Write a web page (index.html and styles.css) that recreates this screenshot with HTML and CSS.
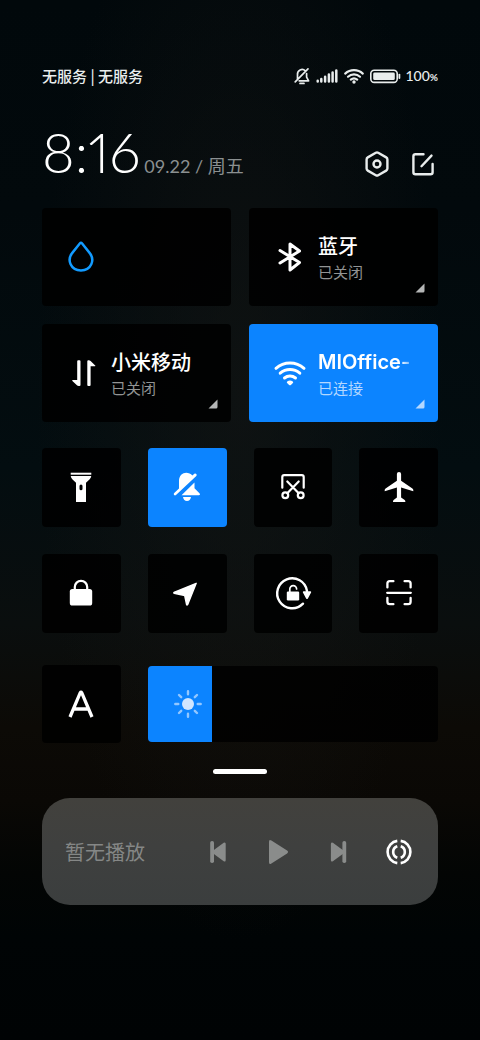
FILE: index.html
```html
<!DOCTYPE html>
<html lang="zh-CN">
<head>
<meta charset="utf-8">
<meta name="viewport" content="width=device-width, initial-scale=1">
<title>控制中心</title>
<link rel="stylesheet" href="styles.css">
</head>
<body>
<main class="control-center">
  <div class="status-bar">
    <span class="carrier">无服务 | 无服务</span>
    <div class="status-icons">
      <svg width="16" height="18" viewBox="0 0 16 18" aria-hidden="true">
        <path d="M3.500 12V7.500a4.600 4.600 0 0 1 7.800-3.700M12.600 6.500v3.700l2 3.600H5.200M6 16.400h4M14 1.800L1.200 14.800" fill="none" stroke="currentColor" stroke-width="1.700" stroke-linecap="round" stroke-linejoin="round"/>
      </svg>
      <svg width="22" height="18" viewBox="0 0 22 18" aria-hidden="true">
        <path d="M1.700 14.600v-.8M5.300 14.600v-2.600M9.100 14.600v-4.800M12.900 14.600v-7M16.600 14.600v-9M20.300 14.600v-11" stroke="currentColor" stroke-width="2.500" stroke-linecap="round"/>
      </svg>
      <svg width="20" height="18" viewBox="0 0 20 18" aria-hidden="true">
        <g fill="none" stroke="currentColor" stroke-width="2.200" stroke-linecap="round"><path d="M1.200 6.600a13 13 0 0 1 17.600 0M4 9.700a9 9 0 0 1 12 0M6.800 12.600a5 5 0 0 1 6.400 0"/></g>
        <circle cx="10" cy="15" r="1.700" fill="currentColor"/>
      </svg>
      <svg width="31" height="18" viewBox="0 0 31 18" aria-hidden="true">
        <rect x=".8" y="3.200" width="26.400" height="12.200" rx="3.400" fill="none" stroke="currentColor" stroke-width="1.600"/>
        <rect x="3.200" y="5.500" width="21.600" height="7.600" rx="1.400" fill="currentColor"/>
        <path d="M29.400 7.600v3.400" stroke="currentColor" stroke-width="1.800" stroke-linecap="round"/>
      </svg>
      <span class="battery">100<small>%</small></span>
    </div>
  </div>

  <header class="header">
    <div class="clock">
      <time class="time">8:16</time>
      <span class="date">09.22 / 周五</span>
    </div>
    <div class="actions">
      <button class="icon-button" type="button" aria-label="设置">
        <svg width="28" height="28" viewBox="0 0 28 28" fill="none" stroke="currentColor" stroke-width="2.400" stroke-linejoin="round">
          <path d="M12.800 2.800q1.200-.7 2.400 0l8 4.600q1.200.7 1.200 2v9.200q0 1.300-1.200 2l-8 4.600q-1.200.7-2.400 0l-8-4.600q-1.200-.7-1.200-2V9.400q0-1.300 1.200-2z"/>
          <circle cx="14" cy="14" r="3.500"/>
        </svg>
      </button>
      <button class="icon-button" type="button" aria-label="编辑">
        <svg width="28" height="28" viewBox="0 0 28 28" fill="none" stroke="currentColor" stroke-width="2.400" stroke-linecap="round">
          <path d="M14.500 4.200H6.400q-2 0-2 2v16q0 2 2 2h15.200q2 0 2-2v-8.200M12.500 16.200L22.500 5.600"/>
        </svg>
      </button>
    </div>
  </header>

  <section class="cards">
    <button class="card" type="button" aria-label="流量">
      <svg class="card-icon drop" viewBox="0 0 34 34" fill="none" stroke="currentColor" stroke-width="2.600" stroke-linejoin="round">
        <path d="M15 2.800q-.6 0-1.200.7L6.300 12.600C0 20 4.500 30.500 15 30.500S30 20 23.700 12.600L16.200 3.500q-.6-.7-1.200-.7z" transform="translate(.4 0) scale(.97 1)"/>
      </svg>
    </button>
    <button class="card" type="button">
      <svg class="card-icon" viewBox="0 0 34 34" fill="none" stroke="currentColor" stroke-width="3" stroke-linecap="round" stroke-linejoin="round">
        <path d="M7 10.500l19.500 12L17 30V4l9.500 7L7 23"/>
      </svg>
      <span class="card-text"><strong>蓝牙</strong><span class="state">已关闭</span></span>
      <svg class="corner" viewBox="0 0 10 10"><path d="M9.500.5v7.500Q9.500 9.500 8 9.500H.5z" fill="currentColor"/></svg>
    </button>
    <button class="card" type="button">
      <svg class="card-icon" viewBox="0 0 34 34" fill="currentColor">
        <path d="M11.200 5.300q0-1 1-1h1.300q1 0 1 1V29q0 1-1 1h-.8q-1 0-1.800-.8l-4.500-4.300q-.6-.8.300-.8h4.500zM21.300 29q0 1 1 1h1.300q1 0 1-1V10.200h4.300q1-.1.300-.8l-4.600-4.400q-.8-.7-1.800-.7h-.5q-1 0-1 1z"/>
      </svg>
      <span class="card-text"><strong>小米移动</strong><span class="state">已关闭</span></span>
      <svg class="corner" viewBox="0 0 10 10"><path d="M9.500.5v7.500Q9.500 9.500 8 9.500H.5z" fill="currentColor"/></svg>
    </button>
    <button class="card active" type="button" aria-pressed="true">
      <svg class="card-icon" viewBox="0 0 34 34">
        <g fill="none" stroke="currentColor" stroke-width="3" stroke-linecap="round"><path d="M3 12.300a21 21 0 0 1 28 0M7.200 17.200a15 15 0 0 1 19.600 0M11.500 22a8.500 8.500 0 0 1 11 0"/></g>
        <path d="M14.200 25.500q2.800-2 5.600 0 .8.600.1 1.400l-2 2q-.9.800-1.800 0l-2-2q-.7-.8.100-1.400z" fill="currentColor"/>
      </svg>
      <span class="card-text"><strong class="network">MIOffice-</strong><span class="state">已连接</span></span>
      <svg class="corner" viewBox="0 0 10 10"><path d="M9.500.5v7.500Q9.500 9.500 8 9.500H.5z" fill="currentColor"/></svg>
    </button>
  </section>

  <section class="tiles">
    <button class="tile" type="button" aria-label="手电筒">
      <svg viewBox="0 0 32 32" fill="currentColor"><path d="M5.700 1.700h20.600v2H5.700z"/><path fill-rule="evenodd" d="M5.700 5h20.600q-.3 2-1.600 3.200l-3.700 3.500V31h-10V11.700L7.300 8.200Q6 7 5.700 5zM16 13.500q-1.500 0-1.500 1.500v2.800q0 1.500 1.500 1.500t1.500-1.500V15q0-1.500-1.500-1.500z"/></svg>
    </button>
    <button class="tile active" type="button" aria-label="静音" aria-pressed="true">
      <svg viewBox="0 0 32 32" fill="currentColor"><path d="M8 17.500V10c0-9 9-10.500 13.400-5.500l1.900-1.700q1.100-.8 2 .1t0 2L5 24q-1.100.8-1.900-.1-.8-1 .1-2zM23.500 11.500v5.700l5.200 5.300q1 1.800-.8 1.800H10.500zM12 26h8q-.7 4-4 4t-4-4z"/></svg>
    </button>
    <button class="tile" type="button" aria-label="截屏">
      <svg viewBox="0 0 32 32" fill="none" stroke="currentColor" stroke-width="2.200" stroke-linecap="round" stroke-linejoin="round"><path d="M5.300 16.700V6q0-1.900 1.900-1.900h17.600q1.900 0 1.900 1.900v10.700M10.300 10.500l11.400 11.700M21.700 10.500L10.300 22.200"/><circle cx="8.300" cy="24.300" r="2.900"/><circle cx="23.700" cy="24.300" r="2.900"/></svg>
    </button>
    <button class="tile" type="button" aria-label="飞行模式">
      <svg viewBox="0 0 32 32" fill="currentColor"><path d="M13.900 3q0-2 2.100-2t2.100 2v6.800l11.300 7.700q.9.600.9 1.500v1.300l-12.200-3.900v10.200l3.600 2.400q.7.600.7 2H10q0-1.400.6-2l3.300-2.400V16.400L1.700 20.300V19q0-.9.900-1.500l11.300-7.700z"/></svg>
    </button>
    <button class="tile" type="button" aria-label="锁屏">
      <svg viewBox="0 0 32 32"><rect x="4.800" y="12" width="22.400" height="16.500" rx="2.600" fill="currentColor"/><path d="M9.800 13V10a6.200 6.200 0 0 1 12.400 0v3" fill="none" stroke="currentColor" stroke-width="2.200"/></svg>
    </button>
    <button class="tile" type="button" aria-label="位置信息">
      <svg viewBox="0 0 32 32" fill="currentColor" stroke="currentColor" stroke-width="1.400" stroke-linejoin="round"><path d="M25.200 6.300L3 15.500q-.6.500.2.800l10.500 2.200 1.900 9.200q.4.800 1 0z"/></svg>
    </button>
    <button class="tile" type="button" aria-label="方向锁定">
      <svg viewBox="0 0 32 32"><path d="M26 26.700A15 15 0 1 1 30 14" fill="none" stroke="currentColor" stroke-width="2.400" stroke-linecap="round"/><path d="M26.500 14.300h7q1 .2.600 1.100l-3.200 6q-.8 1-1.800 0l-3.200-6q-.4-.9.600-1.100z" fill="currentColor"/><rect x="9.800" y="14.500" width="12.400" height="9" rx="1.200" fill="currentColor"/><path d="M12.800 15v-3a3.400 3.400 0 0 1 6.800 0" fill="none" stroke="currentColor" stroke-width="1.700" stroke-linecap="round"/></svg>
    </button>
    <button class="tile" type="button" aria-label="扫一扫">
      <svg viewBox="0 0 32 32" fill="none" stroke="currentColor" stroke-width="2.300" stroke-linecap="round"><path d="M4.400 10.400V6.600q0-2.400 2.400-2.400h3.600M21.600 4.200h3.600q2.400 0 2.400 2.400v3.800M27.600 21v3.800q0 2.400-2.400 2.400h-3.600M10.400 27.200H6.800q-2.400 0-2.400-2.400V21M4.200 15.800h23.600"/></svg>
    </button>
  </section>

  <section class="brightness">
    <button class="tile" type="button" aria-label="自动亮度">
      <svg viewBox="0 0 32 32" fill="none" stroke="currentColor" stroke-width="3.300" stroke-linejoin="round"><path d="M5 29L15.200 4.900q.8-1.300 1.600 0L27 29M8.500 21h15"/></svg>
    </button>
    <div class="slider">
      <input type="range" min="0" max="100" value="22" aria-label="亮度">
      <svg class="sun" viewBox="0 0 30 30" aria-hidden="true"><circle cx="15" cy="15" r="6" fill="#cfe5ff"/><path d="M15 2.300v3M15 24.700v3M2.300 15h3M24.700 15h3M6 6l2.200 2.200M21.800 21.800L24 24M24 6l-2.200 2.200M8.200 21.800L6 24" stroke="#93c7ff" stroke-width="2.400" stroke-linecap="round"/></svg>
    </div>
  </section>

  <div class="handle"></div>

  <section class="media">
    <span class="media-title">暂无播放</span>
    <div class="media-controls">
      <button class="media-button" type="button" aria-label="上一首"><svg viewBox="0 0 28 28" fill="currentColor"><rect x="5.200" y="3" width="3.800" height="22" rx="1.800"/><path d="M20.700 6v16q0 2.400-2 1.200L8.200 15.500V12.500l10.500-7.700q2-1.200 2 1.200z"/></svg></button>
      <button class="media-button" type="button" aria-label="播放"><svg viewBox="0 0 28 28" fill="currentColor"><path d="M4 3.800Q4 1 6.400 2.600l15.700 10q2 1.400 0 2.800l-15.700 10Q4 27 4 24.200z"/></svg></button>
      <button class="media-button" type="button" aria-label="下一首"><svg viewBox="0 0 28 28" fill="currentColor"><rect x="17.400" y="3" width="3.800" height="22" rx="1.800"/><path d="M5.900 6v16q0 2.400 2 1.200l10.500-7.700V12.500L7.900 4.800q-2-1.200-2 1.200z"/></svg></button>
      <button class="media-button output" type="button" aria-label="播放设备"><svg viewBox="0 0 28 28" fill="none" stroke="currentColor" stroke-width="2.600"><path d="M12.300 2.900a11.200 11.200 0 0 0 0 22.200M15.700 2.900a11.200 11.200 0 0 1 0 22.200M12.300 8.300a6 6 0 0 0 0 11.400M15.700 8.300a6 6 0 0 1 0 11.400"/></svg></button>
    </div>
  </section>
</main>
</body>
</html>
```
FILE: styles.css
```css
* {
  box-sizing: border-box;
}

body {
  margin: 0;
  min-height: 100vh;
  background:
    radial-gradient(ellipse at 50% 38%, rgba(22, 22, 20, 0.6), transparent 60%),
    linear-gradient(#01080b 0%, #02090c 20%, #030d10 45%, #0a0e0e 60%, #0c0a06 70%, #0a0805 77%, #030504 84%, #000405 90%, #000304 100%);
  background-color: #000304;
  color: #fff;
  font-family: Lato, "Noto Sans CJK SC", sans-serif;
}

button {
  padding: 0;
  border: 0;
  background: none;
  color: inherit;
  font: inherit;
  text-align: left;
  cursor: pointer;
}

svg {
  display: block;
  overflow: visible;
}

.control-center {
  display: flex;
  flex-direction: column;
  padding: 66px 42px 40px;
}

.status-bar {
  display: flex;
  justify-content: space-between;
  align-items: center;
  height: 20px;
  color: #e9eded;
  font-size: 15px;
  font-weight: 500;
  line-height: 20px;
}

.carrier {
  font-family: "Noto Sans CJK SC", sans-serif;
}

.status-icons {
  display: flex;
  align-items: center;
  gap: 6px;
}

.battery {
  margin-left: -2px;
  font-size: 14px;
}

.battery small {
  font-size: 10px;
  font-weight: 700;
}

.header {
  display: flex;
  justify-content: space-between;
  align-items: flex-end;
  height: 98px;
  margin-bottom: 24px;
}

.clock {
  display: flex;
  align-items: baseline;
  gap: 4px;
}

.time {
  font-size: 56px;
  font-weight: 300;
  font-feature-settings: "pnum";
  line-height: 64px;
}

.date {
  color: #8b9091;
  font-size: 18px;
}

.actions {
  display: flex;
  gap: 18px;
  padding: 0 1px 6px;
}

.icon-button {
  color: #e9eded;
}

.cards {
  display: grid;
  grid-template-columns: repeat(2, 1fr);
  gap: 18px;
}

.card {
  position: relative;
  display: flex;
  align-items: center;
  gap: 11px;
  min-width: 0;
  min-height: 98px;
  padding: 0 18px 0 24px;
  border-radius: 4px;
  background: rgba(0, 0, 0, 0.88);
}

.card-icon {
  flex: none;
  width: 34px;
  height: 34px;
}

.drop {
  color: #129bff;
}

.card-text {
  display: flex;
  flex: 1;
  flex-direction: column;
  align-items: flex-start;
  min-width: 0;
  padding-top: 4px;
}

.card-text strong {
  font-size: 20px;
  font-weight: 500;
  line-height: 26px;
}

.card-text .network {
  font-family: Inter, sans-serif;
  font-weight: 600;
  white-space: nowrap;
  mask-image: linear-gradient(to right, #000 90%, rgba(0, 0, 0, 0.4));
}

.state {
  color: #929494;
  font-size: 15px;
  line-height: 26px;
}

.corner {
  position: absolute;
  right: 13px;
  bottom: 13px;
  width: 10px;
  height: 10px;
  color: #b5b7b7;
}

.active {
  background: #0c84ff;
}

.active .state,
.active .corner {
  color: #b4d8ff;
}

.tiles,
.brightness {
  display: grid;
  grid-template-columns: repeat(4, 1fr);
  gap: 27px;
}

.tiles {
  margin-top: 26px;
}

.tile {
  display: grid;
  place-items: center;
  aspect-ratio: 1;
  border-radius: 4px;
  background: rgba(0, 0, 0, 0.88);
}

.tile.active {
  background: #0c84ff;
}

.tile svg {
  width: 32px;
  height: 32px;
}

.brightness {
  align-items: center;
  margin-top: 32px;
}

.slider {
  position: relative;
  grid-column: span 3;
  height: 76px;
}

.slider input {
  appearance: none;
  display: block;
  width: 100%;
  height: 100%;
  margin: 0;
  border-radius: 4px;
  background: linear-gradient(to right, #0c84ff 22%, rgba(0, 0, 0, 0.88) 22%);
}

.slider input::-webkit-slider-thumb {
  appearance: none;
  width: 1px;
  height: 76px;
  background: transparent;
}

.sun {
  position: absolute;
  top: 23px;
  left: 25px;
  width: 30px;
  height: 30px;
  pointer-events: none;
}

.handle {
  align-self: center;
  width: 54px;
  height: 5px;
  margin-top: 26px;
  border-radius: 3px;
  background: #fff;
}

.media {
  display: flex;
  align-items: center;
  justify-content: space-between;
  min-height: 107px;
  margin-top: 24px;
  padding: 0 19px 0 23px;
  border-radius: 28px;
  background: linear-gradient(#42413d, #3f403f 45%, #3b3e3e);
}

.media-title {
  color: #858786;
  font-size: 20px;
}

.media-controls {
  display: flex;
  gap: 20px;
}

.media-button {
  display: grid;
  place-items: center;
  width: 40px;
  height: 40px;
  color: #8a8c8b;
}

.media-button svg {
  width: 28px;
  height: 28px;
}

.output {
  color: #fff;
}
```
